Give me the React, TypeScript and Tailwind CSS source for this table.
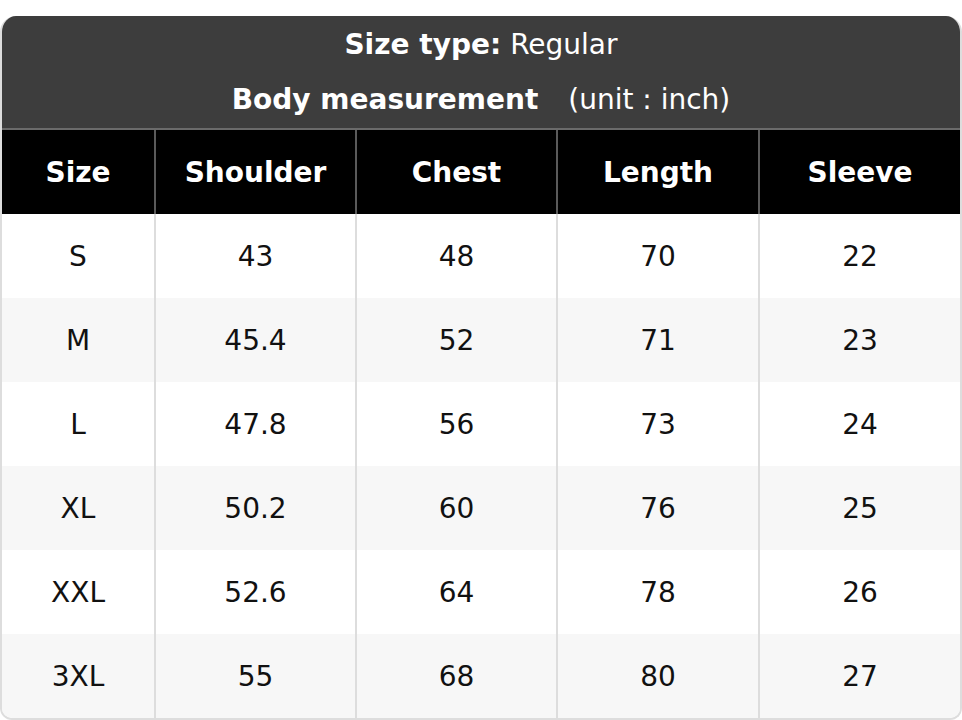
const columns = ["Size", "Shoulder", "Chest", "Length", "Sleeve"]

const rows = [
  ["S", "43", "48", "70", "22"],
  ["M", "45.4", "52", "71", "23"],
  ["L", "47.8", "56", "73", "24"],
  ["XL", "50.2", "60", "76", "25"],
  ["XXL", "52.6", "64", "78", "26"],
  ["3XL", "55", "68", "80", "27"],
]

export default function App() {
  return (
    <div className="bg-white w-[962px] h-[720px] pt-4 font-['DejaVu_Sans',sans-serif]">
      <div className="rounded-t-[16px] rounded-b-[12px] overflow-hidden border-2 border-t-0 border-[#dddddd] bg-white">
        {/* title */}
        <div className="bg-[#3d3d3d] text-white text-[28px] text-center border-b-2 border-[#6b6b6b]">
          <div className="h-[56px] flex items-center justify-center pt-[2px]">
            <span className="font-bold">Size type:</span>
            <span className="ml-[9px]">Regular</span>
          </div>
          <div className="h-[56px] flex items-center justify-center">
            <span className="font-bold">Body measurement</span>
            <span className="ml-[30px]">(unit : inch)</span>
          </div>
        </div>

        {/* column heads */}
        <div className="grid grid-cols-[152px_201px_201px_202px_1fr] bg-black text-white text-[28px] font-bold">
          {columns.map((c, i) => (
            <div
              key={c}
              className={`h-[84px] pt-[2px] flex items-center justify-center ${i > 0 ? "border-l-2 border-[#5a5a5a]" : ""}`}
            >
              {c}
            </div>
          ))}
        </div>

        {/* body */}
        {rows.map((r, ri) => (
          <div
            key={r[0]}
            className={`grid grid-cols-[152px_201px_201px_202px_1fr] text-[28px] text-[#111111] ${ri % 2 === 1 ? "bg-[#f7f7f7]" : "bg-white"}`}
          >
            {r.map((v, i) => (
              <div
                key={i}
                className={`h-[84px] pt-[2px] flex items-center justify-center ${i > 0 ? "border-l-2 border-[#dddddd]" : ""}`}
              >
                {v}
              </div>
            ))}
          </div>
        ))}
      </div>
    </div>
  )
}
